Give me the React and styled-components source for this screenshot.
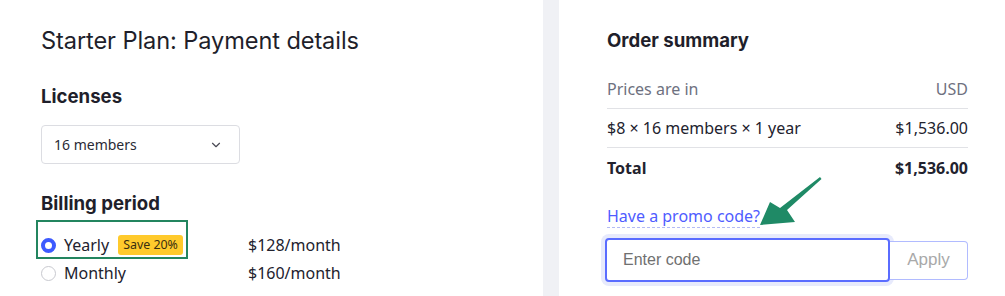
import React from 'react';
import styled, { createGlobalStyle } from 'styled-components';
import { ChevronDown } from 'lucide-react';

const GlobalStyle = createGlobalStyle`
  * { box-sizing: border-box; }
  body {
    margin: 0;
    background: #ffffff;
    font-family: 'Noto Sans', 'Open Sans', sans-serif;
    color: #1f1f2b;
  }
`;

const billing = [
  { id: 'yearly', label: 'Yearly', price: '$128/month', badge: 'Save 20%', checked: true },
  { id: 'monthly', label: 'Monthly', price: '$160/month' },
];

const lines = [
  { left: 'Prices are in', right: 'USD', muted: true },
  { left: '$8 × 16 members × 1 year', right: '$1,536.00' },
  { left: 'Total', right: '$1,536.00', strong: true },
];

const App = () => {
  return (
    <>
      <GlobalStyle />
      <Page>
        <Details>
          <Title>Starter Plan: Payment details</Title>
          <SectionTitle>Licenses</SectionTitle>
          <Select>
            <span>16 members</span>
            <ChevronDown size={14} strokeWidth={2} color="#4a4a55" />
          </Select>
          <SectionTitle $top={27}>Billing period</SectionTitle>
          <Options>
            {billing.map((opt) => (
              <Option key={opt.id}>
                {opt.checked && <Highlight />}
                <Choice>
                  <Radio $checked={opt.checked} />
                  <OptionLabel>{opt.label}</OptionLabel>
                  {opt.badge && <Badge>{opt.badge}</Badge>}
                </Choice>
                <Price>{opt.price}</Price>
              </Option>
            ))}
          </Options>
        </Details>
        <Gutter />
        <Summary>
          <SummaryTitle>Order summary</SummaryTitle>
          <Lines>
            {lines.map((line, i) => (
              <Line key={i} $muted={line.muted} $strong={line.strong}>
                <span>{line.left}</span>
                <span>{line.right}</span>
              </Line>
            ))}
          </Lines>
          <PromoLink>Have a promo code?</PromoLink>
          <PromoRow>
            <CodeInput placeholder="Enter code" autoFocus />
            <ApplyButton>Apply</ApplyButton>
          </PromoRow>
          <Pointer width="70" height="60" viewBox="0 0 70 60">
            <polygon
              points="60,0 61.5,2 27,33 35,45 0,48 10,25 20,31"
              fill="#1f8a66"
            />
          </Pointer>
        </Summary>
      </Page>
    </>
  );
};

const Page = styled.div`
  display: flex;
  width: 1005px;
  height: 296px;
  overflow: hidden;
`;

const Details = styled.div`
  flex: 0 0 543px;
  padding: 25px 41px 0 41px;
  display: flex;
  flex-direction: column;
  align-items: flex-start;
`;

const Gutter = styled.div`
  flex: 0 0 16px;
  background: #f0f1f5;
`;

const Summary = styled.div`
  position: relative;
  flex: 1;
  min-width: 0;
  padding: 28px 37px 0 48px;
  display: flex;
  flex-direction: column;
`;

const Title = styled.h1`
  margin: 0;
  font-family: 'Inter', 'Lato', sans-serif;
  font-size: 23.6px;
  font-weight: 400;
  line-height: 31px;
  color: #1f1f2b;
  letter-spacing: -0.1px;
`;

const SectionTitle = styled.h2`
  margin: ${({ $top }) => $top || 28}px 0 0 0;
  font-family: 'Inter', 'Lato', sans-serif;
  font-size: 18.6px;
  font-weight: 700;
  line-height: 24px;
  color: #1f1f2b;
`;

const SummaryTitle = styled(SectionTitle)`
  margin: 0;
`;

const Select = styled.div`
  margin-top: 17px;
  width: 199px;
  height: 39px;
  border: 1px solid #dcdde2;
  border-radius: 4px;
  padding: 0 16px 0 12px;
  display: flex;
  align-items: center;
  justify-content: space-between;
  font-size: 14px;
  color: #2a2a35;
`;

const Options = styled.div`
  margin-top: 16px;
  display: flex;
  flex-direction: column;
  width: 100%;
`;

const Option = styled.div`
  position: relative;
  display: flex;
  align-items: center;
  height: 28px;
`;

const Highlight = styled.div`
  position: absolute;
  left: -5px;
  top: -11px;
  width: 152px;
  height: 39px;
  border: 2px solid #23855f;
  pointer-events: none;
`;

const Choice = styled.div`
  display: flex;
  align-items: center;
  width: 207px;
`;

const Radio = styled.span`
  width: 15px;
  height: 15px;
  border-radius: 50%;
  flex-shrink: 0;
  background: #ffffff;
  border: ${({ $checked }) => ($checked ? '4.5px solid #3d5afe' : '1px solid #c8c9cf')};
`;

const OptionLabel = styled.span`
  margin-left: 8px;
  font-size: 16px;
  color: #22222e;
`;

const Badge = styled.span`
  margin-left: 9px;
  background: #ffca2c;
  border-radius: 3px;
  padding: 1px 5px;
  font-size: 12.4px;
  line-height: 18px;
  color: #3a2e10;
`;

const Price = styled.span`
  font-size: 16px;
  color: #22222e;
`;

const Lines = styled.div`
  margin-top: 18px;
  display: flex;
  flex-direction: column;
`;

const Line = styled.div`
  display: flex;
  justify-content: space-between;
  align-items: center;
  height: 39px;
  font-size: 16px;
  font-weight: ${({ $strong }) => ($strong ? 700 : 400)};
  color: ${({ $muted }) => ($muted ? '#6e7180' : '#22222e')};
  border-bottom: 1px solid #e1e2e6;

  &:last-child {
    border-bottom: none;
    height: 40px;
  }
`;

const PromoLink = styled.a`
  align-self: flex-start;
  margin-top: 17px;
  font-size: 16px;
  line-height: 22px;
  color: #4f5cff;
  border-bottom: 1px dashed #b3bbf5;
  cursor: pointer;
`;

const PromoRow = styled.div`
  margin-top: 10px;
  margin-left: -2px;
  display: flex;
  align-items: center;
`;

const CodeInput = styled.input`
  flex: 0 0 285px;
  height: 44px;
  border: 2px solid #5a6cff;
  border-radius: 4px;
  box-shadow: 0 0 0 4px #e7eafc;
  padding: 0 16px;
  font-family: 'Liberation Sans', Arial, sans-serif;
  font-size: 16px;
  color: #222;
  outline: none;
  caret-color: #000;

  &::placeholder {
    color: #707070;
  }
`;

const ApplyButton = styled.button`
  flex: 0 0 78px;
  height: 39px;
  border: 1px solid #b1bbff;
  border-left: none;
  border-radius: 0 4px 4px 0;
  background: #ffffff;
  font-family: 'Liberation Sans', Arial, sans-serif;
  font-size: 17px;
  color: #a9a9a9;
`;

const Pointer = styled.svg`
  position: absolute;
  left: 201px;
  top: 177px;
  pointer-events: none;
`;

export default App;
